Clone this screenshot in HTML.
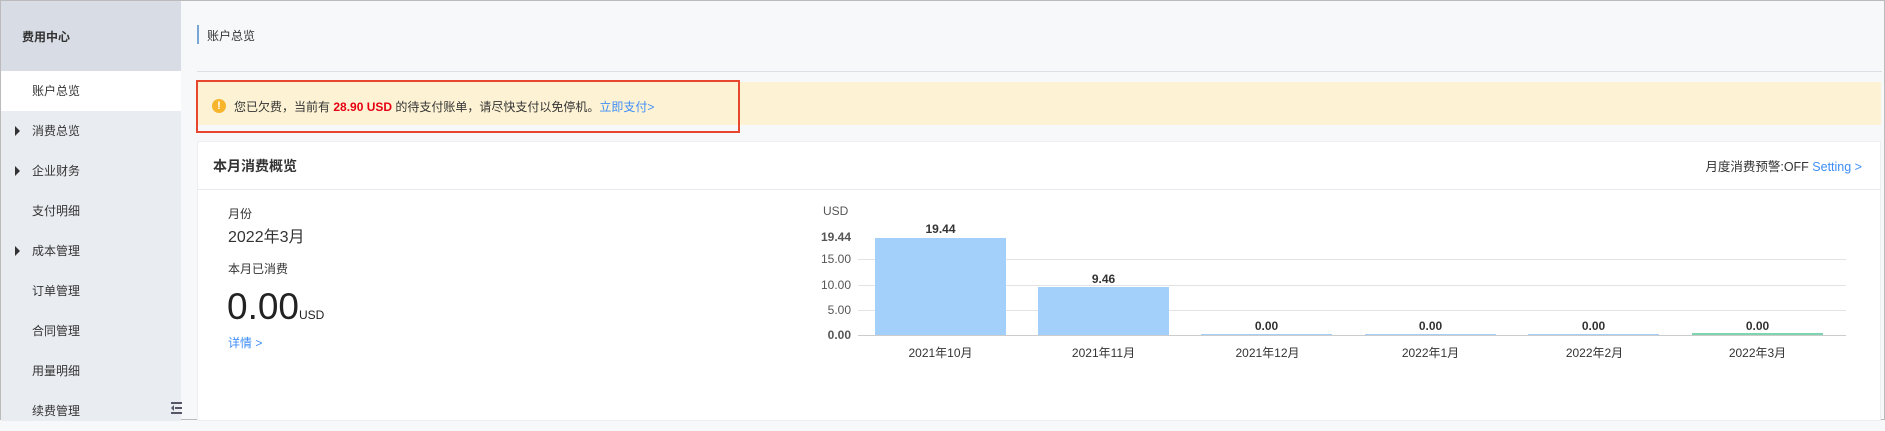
<!DOCTYPE html>
<html><head><meta charset="utf-8"><style>
*{margin:0;padding:0;box-sizing:border-box}
body{width:1885px;height:420px;overflow:hidden;background:#f7f8fa;font-family:"Liberation Sans","Noto Sans CJK SC",sans-serif;font-size:12px;color:#333;position:relative;border:1px solid #bbb}
.abs{position:absolute;white-space:nowrap}
.side{position:absolute;left:0;top:0;width:180px;height:420px;background:#e9ecf1}
.sh{position:absolute;left:0;top:0;width:180px;height:70px;background:#d8dde5}
.item{position:absolute;left:0;width:180px;height:40px;line-height:40px;padding-left:31px;color:#333;font-size:12px}
.item.act{background:#fff}
.tri{position:absolute;left:14px;top:15px;width:0;height:0;border-left:5px solid #333;border-top:5px solid transparent;border-bottom:5px solid transparent}
.blue{color:#3e8ef7}
.grid{position:absolute;left:857px;width:988px;height:1px;background:#e3e3e3}
.yl{position:absolute;width:60px;left:790px;text-align:right;font-size:12px;color:#555}
.xl{position:absolute;width:163px;text-align:center;font-size:12px;color:#333}
.bar{position:absolute;background:#a3d0fb}
.vl{position:absolute;width:131px;text-align:center;font-size:12px;font-weight:bold;color:#333}
</style></head><body>
<div class="side">
<div class="sh"></div>
<div class="abs" style="left:21px;top:27px;font-weight:bold;font-size:12px">费用中心</div>
<div class="item act" style="top:70px">账户总览</div>
<div class="item" style="top:110px"><span class="tri"></span>消费总览</div>
<div class="item" style="top:150px"><span class="tri"></span>企业财务</div>
<div class="item" style="top:190px">支付明细</div>
<div class="item" style="top:230px"><span class="tri"></span>成本管理</div>
<div class="item" style="top:270px">订单管理</div>
<div class="item" style="top:310px">合同管理</div>
<div class="item" style="top:350px">用量明细</div>
<div class="item" style="top:390px">续费管理</div>
<svg class="abs" style="left:170px;top:401px" width="11" height="12"><rect x="0" y="0" width="11" height="2" fill="#556"/><rect x="4" y="5" width="7" height="2" fill="#556"/><rect x="0" y="10" width="11" height="2" fill="#556"/><path d="M3 3 L0 6 L3 9Z" fill="#556"/></svg>
</div>
<div class="abs" style="left:196px;top:24px;width:2px;height:19px;background:#7aa6d6"></div>
<div class="abs" style="left:206px;top:26px;font-size:12px">账户总览</div>
<div class="abs" style="left:196px;top:70px;width:1685px;height:1px;background:#dcdfe3"></div>
<div class="abs" style="left:196px;top:81px;width:1684px;height:43px;background:#fdf3d4"></div>
<div class="abs" style="left:195px;top:79px;width:544px;height:53px;border:2px solid #e8472f"></div>
<div class="abs" style="left:211px;top:98px;width:14px;height:14px;border-radius:50%;background:#f6b52c;color:#fff;font-size:11px;font-weight:bold;text-align:center;line-height:14px">!</div>
<div class="abs" style="left:233px;top:97px;font-size:12px">您已欠费，当前有 <b style="color:#e60012">28.90 USD</b> 的待支付账单，请尽快支付以免停机。<span class="blue">立即支付&gt;</span></div>
<div class="abs" style="left:196px;top:140px;width:1684px;height:280px;background:#fff;border:1px solid #eceef1"></div>
<div class="abs" style="left:212px;top:155px;font-weight:bold;font-size:14px">本月消费概览</div>
<div class="abs" style="right:22px;top:155px;font-size:12.5px">月度消费预警:OFF <span class="blue">Setting &gt;</span></div>
<div class="abs" style="left:196px;top:188px;width:1684px;height:1px;background:#e6e9ed"></div>
<div class="abs" style="left:227px;top:204px;font-size:12px">月份</div>
<div class="abs" style="left:227px;top:222px;font-size:16px">2022年3月</div>
<div class="abs" style="left:227px;top:259px;font-size:12px">本月已消费</div>
<div class="abs" style="left:226px;top:285px;font-size:37px;color:#222">0.00<span style="font-size:12px">USD</span></div>
<div class="abs blue" style="left:227px;top:333px;font-size:12px">详情 &gt;</div>
<div class="abs" style="left:822px;top:203px;font-size:12px;color:#555">USD</div>
<div class="grid" style="top:258px"></div>
<div class="grid" style="top:284px"></div>
<div class="grid" style="top:309px"></div>
<div class="grid" style="top:334px;background:#ccc"></div>
<div class="yl" style="top:229px;font-weight:bold">19.44</div>
<div class="yl" style="top:251px">15.00</div>
<div class="yl" style="top:277px">10.00</div>
<div class="yl" style="top:302px">5.00</div>
<div class="yl" style="top:327px;font-weight:bold">0.00</div>
<div class="bar" style="left:874px;top:237px;width:131px;height:97px"></div>
<div class="bar" style="left:1037px;top:286px;width:131px;height:48px"></div>
<div class="bar" style="left:1200px;top:333px;width:131px;height:1px"></div>
<div class="bar" style="left:1364px;top:333px;width:131px;height:1px"></div>
<div class="bar" style="left:1527px;top:333px;width:131px;height:1px"></div>
<div class="bar" style="left:1691px;top:332px;width:131px;height:2px;background:#7fd4b0"></div>
<div class="vl" style="left:874px;top:221px">19.44</div>
<div class="vl" style="left:1037px;top:271px">9.46</div>
<div class="vl" style="left:1200px;top:318px">0.00</div>
<div class="vl" style="left:1364px;top:318px">0.00</div>
<div class="vl" style="left:1527px;top:318px">0.00</div>
<div class="vl" style="left:1691px;top:318px">0.00</div>
<div class="xl" style="left:858px;top:343px">2021年10月</div>
<div class="xl" style="left:1021px;top:343px">2021年11月</div>
<div class="xl" style="left:1185px;top:343px">2021年12月</div>
<div class="xl" style="left:1348px;top:343px">2022年1月</div>
<div class="xl" style="left:1512px;top:343px">2022年2月</div>
<div class="xl" style="left:1675px;top:343px">2022年3月</div>
</body></html>
